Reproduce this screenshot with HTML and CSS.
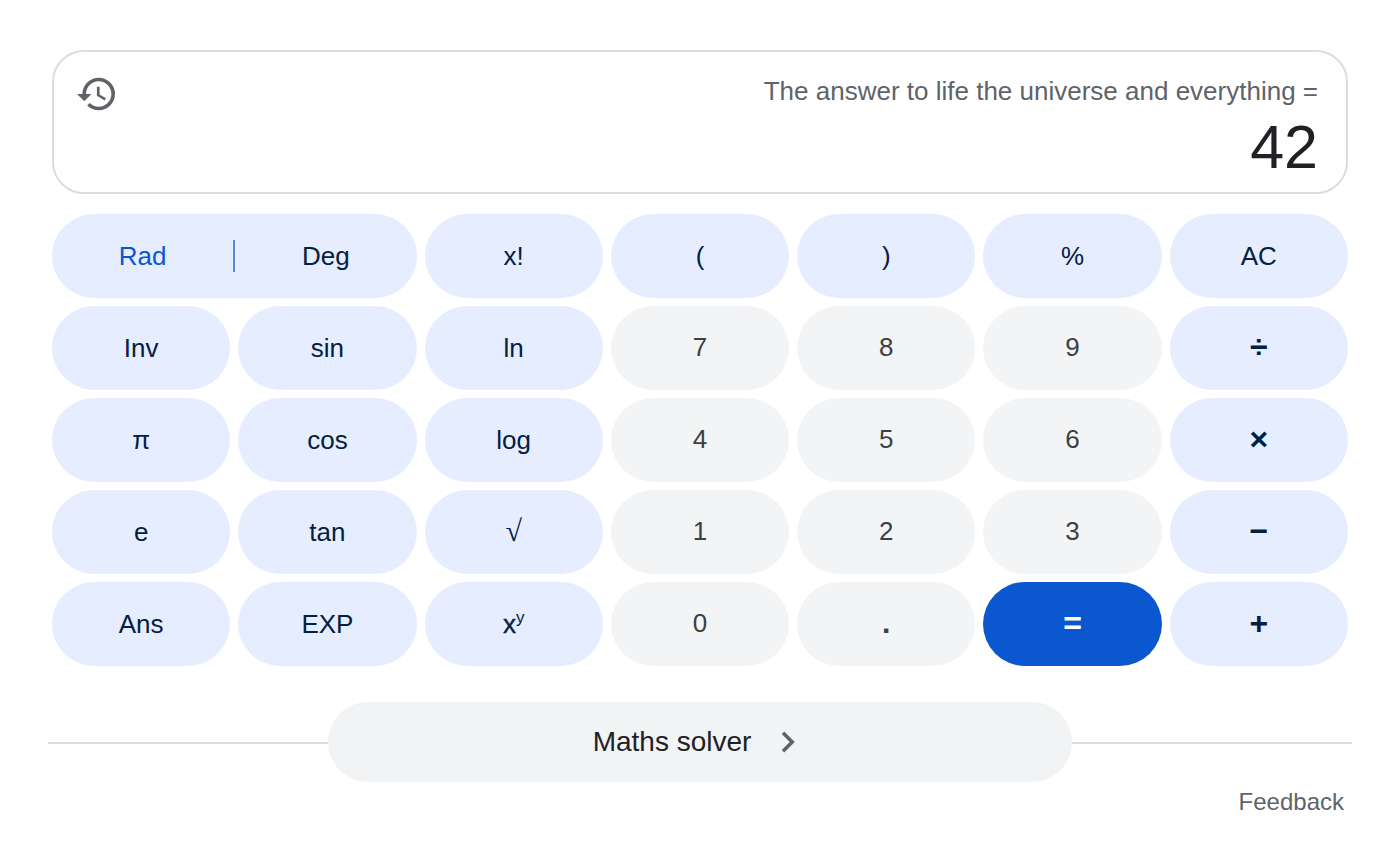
FILE: index.html
```html
<!DOCTYPE html>
<html lang="en">
<head>
<meta charset="utf-8">
<title>Calculator</title>
<link rel="stylesheet" href="styles.css">
</head>
<body>
<main class="calc">
  <section class="display">
    <svg class="history" viewBox="1 3 21 18" width="38" height="34" aria-hidden="true"><path d="M13 3a9 9 0 0 0-9 9H1l3.89 3.89.07.14L9 12H6c0-3.87 3.13-7 7-7s7 3.13 7 7-3.13 7-7 7c-1.93 0-3.68-.79-4.94-2.06l-1.42 1.42A8.954 8.954 0 0 0 13 21a9 9 0 0 0 0-18zm-1 5v5l4.28 2.54.72-1.21-3.5-2.08V8H12z"/></svg>
    <div class="readout">
      <div class="expr">The answer to life the universe and everything =</div>
      <div class="result">42</div>
    </div>
  </section>
  <section class="keys">
    <div class="key fn toggle"><span class="on">Rad</span><span class="sep"></span><span>Deg</span></div>
    <button class="key fn">x!</button>
    <button class="key fn">(</button>
    <button class="key fn">)</button>
    <button class="key fn">%</button>
    <button class="key fn">AC</button>
    <button class="key fn">Inv</button>
    <button class="key fn">sin</button>
    <button class="key fn">ln</button>
    <button class="key num">7</button>
    <button class="key num">8</button>
    <button class="key num">9</button>
    <button class="key fn op">÷</button>
    <button class="key fn">π</button>
    <button class="key fn">cos</button>
    <button class="key fn">log</button>
    <button class="key num">4</button>
    <button class="key num">5</button>
    <button class="key num">6</button>
    <button class="key fn op">×</button>
    <button class="key fn">e</button>
    <button class="key fn">tan</button>
    <button class="key fn root">√</button>
    <button class="key num">1</button>
    <button class="key num">2</button>
    <button class="key num">3</button>
    <button class="key fn op">−</button>
    <button class="key fn">Ans</button>
    <button class="key fn">EXP</button>
    <button class="key fn"><span class="base">x</span><sup>y</sup></button>
    <button class="key num">0</button>
    <button class="key num dot">.</button>
    <button class="key eq op">=</button>
    <button class="key fn op">+</button>
  </section>
  <section class="solver-row">
    <button class="solver"><span>Maths solver</span>
      <svg class="chev" viewBox="0 0 16 24" width="16" height="24" aria-hidden="true"><path d="M3 2.8l9.2 9.2L3 21.2" fill="none" stroke="#5f6368" stroke-width="3.6"/></svg>
    </button>
  </section>
  <footer class="foot">Feedback</footer>
</main>
</body>
</html>
```
FILE: styles.css
```css
* { box-sizing: border-box; }
html, body { margin: 0; background: #fff; }
body { font-family: "Liberation Sans", Arial, sans-serif; }
.calc { width: 1390px; height: 846px; padding: 50px 38px 0 48px; overflow: hidden; }
.display {
  margin: 0 4px;
  height: 144px;
  border: 2px solid #dadce0;
  border-radius: 32px;
  display: flex;
  justify-content: space-between;
  align-items: flex-start;
  padding: 25px 28px 0 23px;
}
.history { fill: #5f6368; flex: none; }
.readout { text-align: right; margin-top: -4px; }
.expr { font-size: 26px; line-height: 36px; color: #5f6368; }
.result { font-size: 61px; line-height: 68px; color: #202124; margin-top: 4px; }
.keys {
  margin: 20px 4px 0;
  display: grid;
  grid-template-columns: repeat(7, 1fr);
  grid-auto-rows: 84px;
  gap: 8px;
}
.key {
  border: 0;
  padding: 0;
  border-radius: 42px;
  font: 26px "Liberation Sans", Arial, sans-serif;
  display: flex;
  align-items: center;
  justify-content: center;
}
.fn { background: #e5edff; color: #04203f; }
.num { background: #f3f4f6; color: #3c4043; padding-bottom: 2px; }
.eq { background: #0b57d0; color: #fff; }
.op { font-size: 32px; font-weight: 700; padding-bottom: 2px; }
.dot { font-size: 30px; font-weight: 700; }
.root { font-family: "Liberation Serif", serif; font-size: 30px; padding-bottom: 2px; }
.toggle { grid-column: span 2; }
.toggle span:not(.sep) { flex: 1; text-align: center; }
.on { color: #0b57d0; }
.sep { width: 2px; height: 32px; background: #5a86d2; }
.base { -webkit-text-stroke: 0.4px #04203f; }
sup { font-size: 17px; line-height: 1; margin-bottom: 14px; }
.solver-row {
  margin-top: 36px;
  height: 80px;
  display: flex;
  justify-content: center;
  background: linear-gradient(#dadce0, #dadce0) center 40px / 100% 2px no-repeat;
}
.solver {
  width: 744px;
  border: 0;
  padding: 0;
  border-radius: 40px;
  background: #f1f3f4;
  color: #202124;
  font: 28px "Liberation Sans", Arial, sans-serif;
  display: flex;
  align-items: center;
  justify-content: center;
  gap: 29px;
}
.chev { margin-right: 11px; }
.foot { margin-top: 4px; padding-right: 8px; text-align: right; font-size: 24px; line-height: 32px; color: #5f6368; }
```
